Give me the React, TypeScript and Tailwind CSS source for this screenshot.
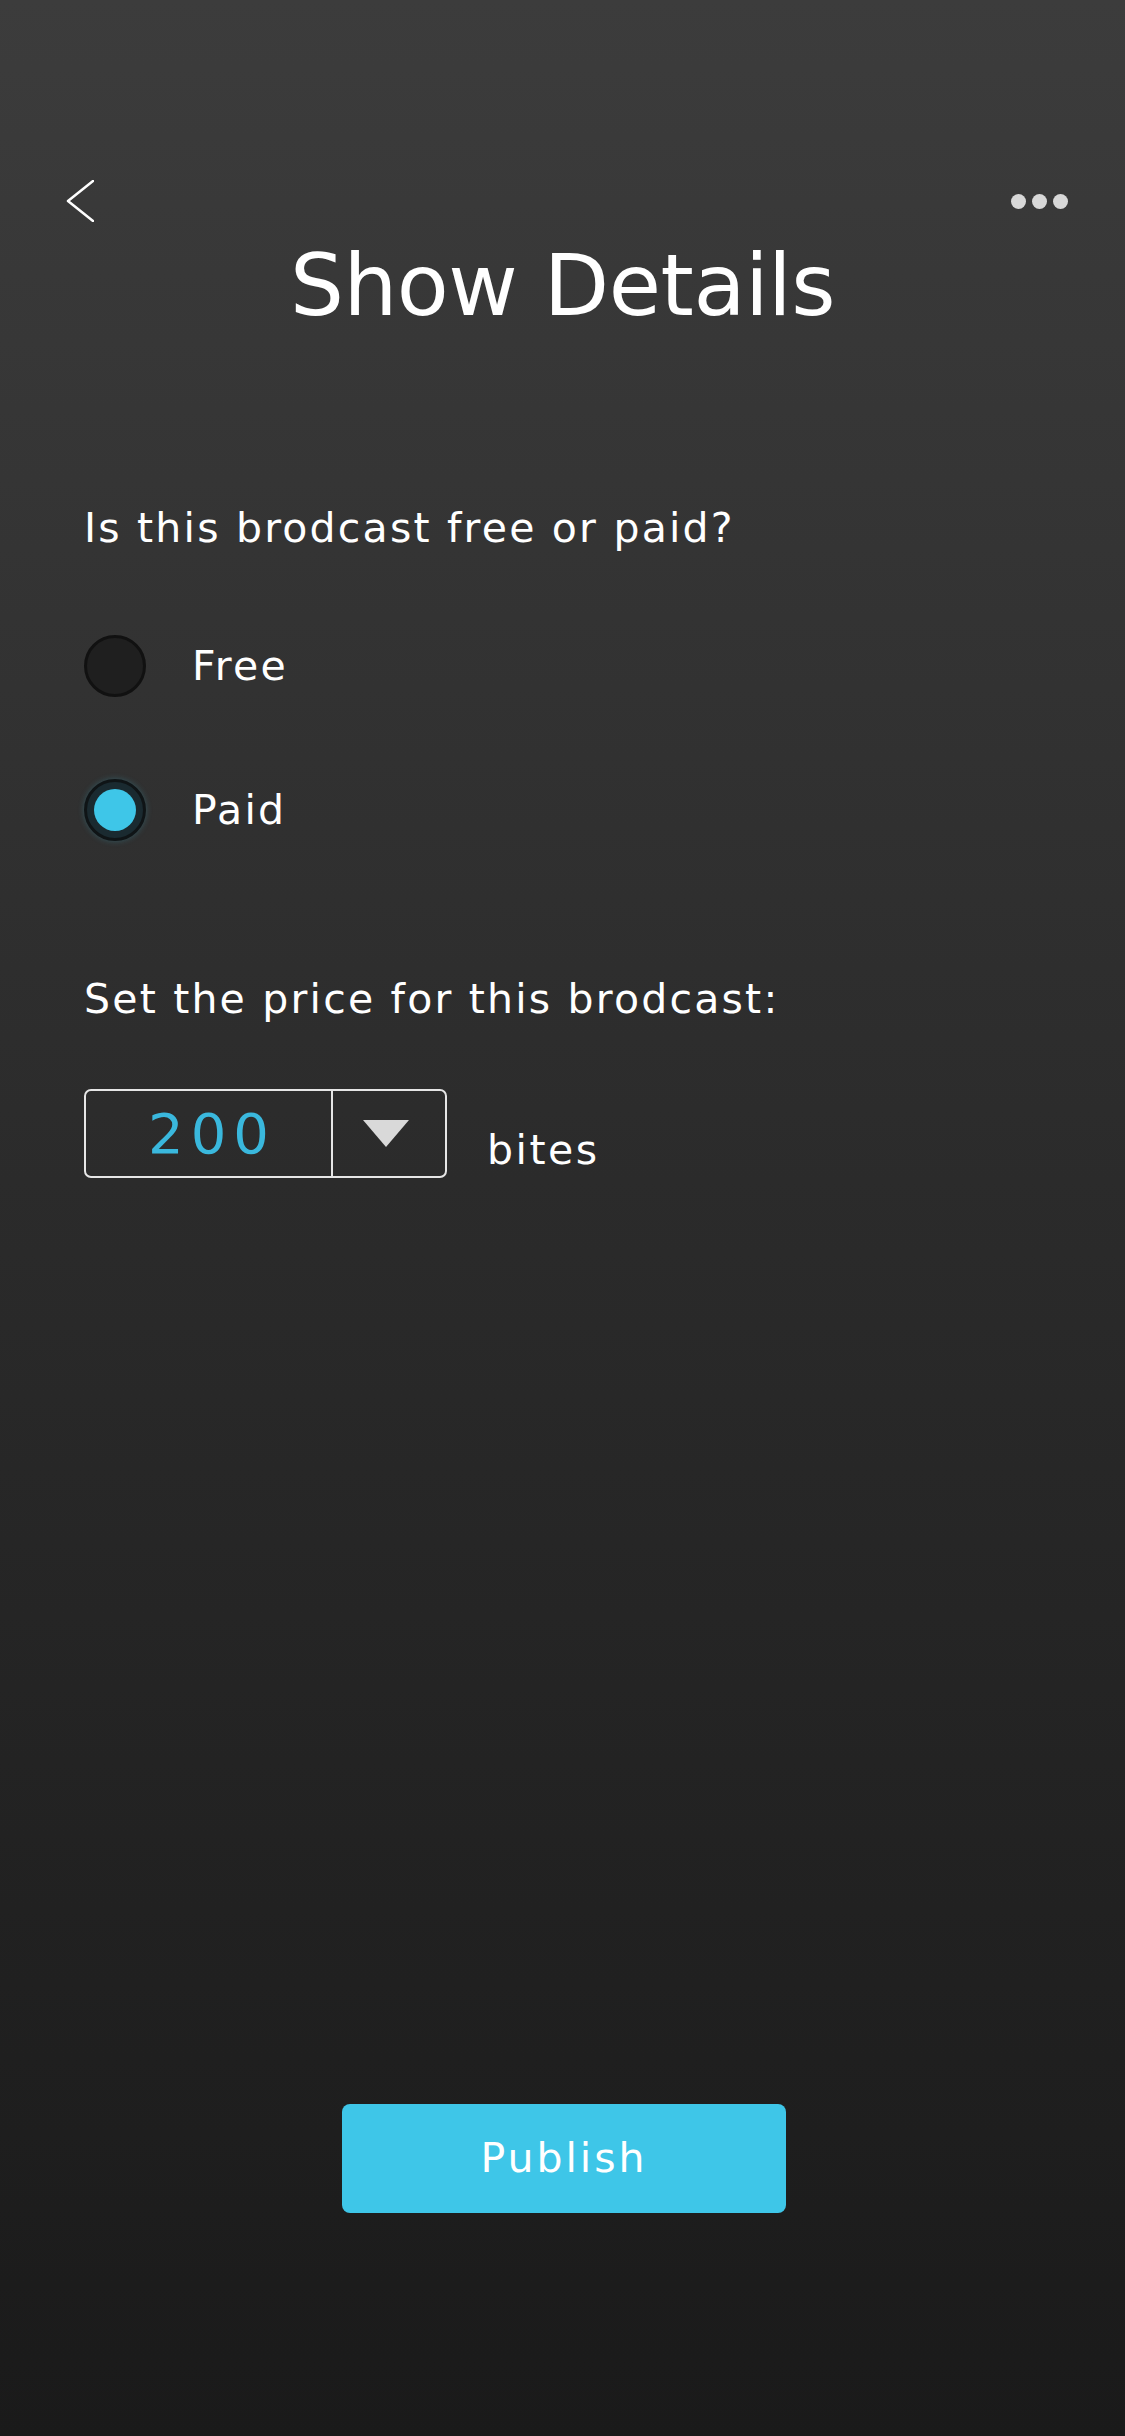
import React from "react";

const font = { fontFamily: '"DejaVu Sans", "Liberation Sans", sans-serif' };

function Radio({ checked }: { checked: boolean }) {
  if (checked) {
    return (
      <div className="flex h-[62px] w-[62px] shrink-0 items-center justify-center rounded-full border-[3px] border-[#0f1416] bg-[#1a2a30] shadow-[0_0_6px_rgba(62,198,232,0.25)]">
        <div className="h-[42px] w-[42px] rounded-full bg-[#3ec6e8]" />
      </div>
    );
  }
  return (
    <div className="h-[62px] w-[62px] shrink-0 rounded-full border-[3px] border-[#111111] bg-[#1f1f1f]" />
  );
}

export default function App() {
  return (
    <div
      className="flex h-[2436px] w-[1125px] flex-col bg-gradient-to-b from-[#3c3c3c] to-[#1a1a1a] text-white"
      style={font}
    >
      {/* header */}
      <div className="mt-[180px] flex h-[42px] items-center justify-between pl-[66px] pr-[57px]">
        <svg width="28" height="42" viewBox="0 0 28 42" fill="none">
          <polyline points="27,1 2,21 27,41" stroke="#ffffff" strokeWidth="2.5" strokeLinecap="round" strokeLinejoin="round" />
        </svg>
        <div className="flex gap-[6px]">
          <div className="h-[15px] w-[15px] rounded-full bg-[#d8d8d8]" />
          <div className="h-[15px] w-[15px] rounded-full bg-[#d8d8d8]" />
          <div className="h-[15px] w-[15px] rounded-full bg-[#d8d8d8]" />
        </div>
      </div>

      <h1 className="mt-[21px] text-center text-[85px] leading-none font-normal tracking-[-0.5px]">
        Show Details
      </h1>

      <div className="flex flex-col px-[84px]">
        <p className="mt-[180px] text-[41px] leading-none tracking-[2.2px]">Is this brodcast free or paid?</p>

        <div className="mt-[86px] flex items-center">
          <Radio checked={false} />
          <span className="ml-[46px] text-[41px] leading-none tracking-[2.2px]">Free</span>
        </div>
        <div className="mt-[82px] flex items-center">
          <Radio checked={true} />
          <span className="ml-[46px] text-[41px] leading-none tracking-[2.2px]">Paid</span>
        </div>

        <p className="mt-[138px] text-[41px] leading-none tracking-[2.2px]">Set the price for this brodcast:</p>

        <div className="mt-[69px] flex items-center">
          <div className="flex h-[89px] w-[363px] rounded-[7px] border-2 border-[#e6e6e6]">
            <div className="flex w-[247px] items-center justify-center border-r-2 border-[#e6e6e6]">
              <span className="pl-[7px] text-[56px] leading-none tracking-[7px] text-[#3ab8dd]">200</span>
            </div>
            <div className="flex flex-1 items-center justify-center pr-[6px]">
              <svg width="46" height="27" viewBox="0 0 46 27">
                <polygon points="0,0 46,0 23,27" fill="#d9d9d9" />
              </svg>
            </div>
          </div>
          <span className="ml-[40px] mt-[34px] text-[41px] leading-none tracking-[2.5px]">bites</span>
        </div>
      </div>

      <div className="mt-auto mb-[223px] flex justify-center pl-[3px]">
        <button className="flex h-[109px] w-[444px] items-center justify-center rounded-[8px] bg-[#3ec6e8] text-[41px] leading-none tracking-[3px] text-white">
          Publish
        </button>
      </div>
    </div>
  );
}
